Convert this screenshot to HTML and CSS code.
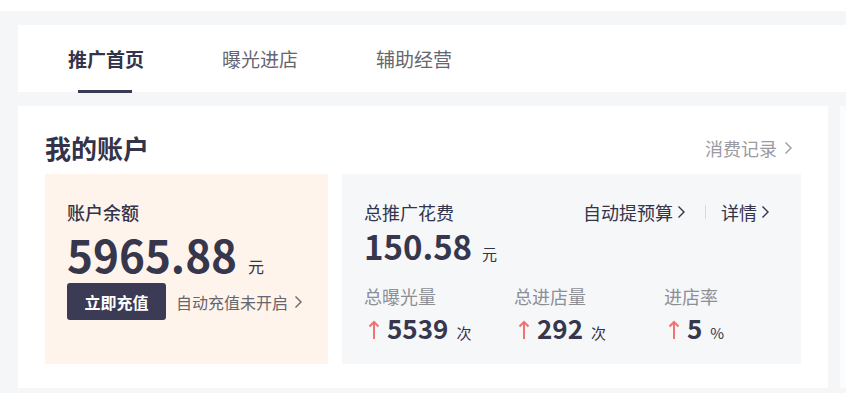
FILE: index.html
```html
<!DOCTYPE html>
<html lang="zh-CN">
<head>
<meta charset="utf-8">
<title>推广首页</title>
<link rel="stylesheet" href="styles.css">
</head>
<body>
<div class="topbar"></div>
<div class="page">
  <nav class="tabs">
    <a class="tab active">推广首页</a>
    <a class="tab">曝光进店</a>
    <a class="tab">辅助经营</a>
  </nav>
  <div class="row">
    <section class="panel">
      <header class="panel-head">
        <h2 class="title">我的账户</h2>
        <a class="link-gray">消费记录<svg class="chev" viewBox="0 0 8 14" width="8" height="14"><polyline points="1.5,1.5 7,7 1.5,12.5"/></svg></a>
      </header>
      <div class="cards">
        <div class="card card-balance">
          <div class="card-label strong">账户余额</div>
          <div class="amount big">5965.88<span class="unit">元</span></div>
          <div class="actions">
            <button class="btn">立即充值</button>
            <a class="link-sub">自动充值未开启<svg class="chev" viewBox="0 0 8 14" width="8" height="14"><polyline points="1.5,1.5 7,7 1.5,12.5"/></svg></a>
          </div>
        </div>
        <div class="card card-spend">
          <div class="spend-head">
            <div class="card-label">总推广花费</div>
            <div class="spend-links">
              <a class="link-dark">自动提预算<svg class="chev" viewBox="0 0 8 14" width="8" height="14"><polyline points="1.5,1.5 7,7 1.5,12.5"/></svg></a>
              <span class="sep"></span>
              <a class="link-dark">详情<svg class="chev" viewBox="0 0 8 14" width="8" height="14"><polyline points="1.5,1.5 7,7 1.5,12.5"/></svg></a>
            </div>
          </div>
          <div class="amount mid">150.58<span class="unit mid-unit">元</span></div>
          <div class="stats">
            <div class="stat">
              <div class="stat-label">总曝光量</div>
              <div class="stat-value"><svg class="up" viewBox="0 0 12 20" width="12" height="20"><line x1="6" y1="2" x2="6" y2="19"/><polyline points="1.5,6.5 6,2 10.5,6.5"/></svg>5539<span class="unit stat-unit">次</span></div>
            </div>
            <div class="stat">
              <div class="stat-label">总进店量</div>
              <div class="stat-value"><svg class="up" viewBox="0 0 12 20" width="12" height="20"><line x1="6" y1="2" x2="6" y2="19"/><polyline points="1.5,6.5 6,2 10.5,6.5"/></svg>292<span class="unit stat-unit">次</span></div>
            </div>
            <div class="stat">
              <div class="stat-label">进店率</div>
              <div class="stat-value"><svg class="up" viewBox="0 0 12 20" width="12" height="20"><line x1="6" y1="2" x2="6" y2="19"/><polyline points="1.5,6.5 6,2 10.5,6.5"/></svg>5<span class="unit stat-unit">%</span></div>
            </div>
          </div>
        </div>
      </div>
    </section>
    <aside class="side"></aside>
  </div>
</div>
</body>
</html>
```
FILE: styles.css
```css
* { box-sizing: border-box; }
html, body { margin: 0; padding: 0; }
body {
  background: #f5f6f8;
  font-family: "Noto Sans CJK SC", "Noto Sans", sans-serif;
  color: #33334a;
  width: 846px;
  height: 393px;
  overflow: hidden;
}
.topbar { height: 11px; background: #ffffff; }
.page { padding: 14px 0 0 18px; }

.tabs {
  display: flex;
  height: 67px;
  background: #ffffff;
  padding-left: 50px;
  gap: 78px;
  align-items: center;
}
.tab {
  position: relative;
  font-size: 19px;
  line-height: 24px;
  color: #666670;
  white-space: nowrap;
}
.tab.active { color: #33334a; font-weight: 700; }
.tab.active::after {
  content: "";
  position: absolute;
  left: 10px;
  right: 12px;
  bottom: -22px;
  height: 3px;
  background: #3a3a52;
}

.row { display: flex; margin-top: 14px; gap: 12px; }
.panel {
  flex: none;
  width: 810px;
  height: 282px;
  background: #ffffff;
  padding: 24px 27px 0 27px;
}
.side { flex: 1; height: 282px; background: #fcfcfd; }

.panel-head {
  display: flex;
  justify-content: space-between;
  align-items: center;
  height: 36px;
  margin-bottom: 8px;
}
.title { margin: 0; font-size: 26px; font-weight: 700; line-height: 36px; color: #33334a; }
.link-gray { display: flex; align-items: center; gap: 7px; font-size: 18px; color: #9a9aa2; margin-right: 9px; }

.chev { flex: none; fill: none; stroke: currentColor; stroke-width: 1.4; }

.cards { display: flex; gap: 14px; height: 190px; }
.card { padding: 26px 0 0 22px; }
.card-balance { flex: none; width: 283px; background: #fef4eb; }
.card-spend { flex: none; width: 459px; background: #f5f7f9; padding-right: 32px; }

.card-label { font-size: 18px; line-height: 24px; color: #33334a; white-space: nowrap; }
.card-label.strong { font-weight: 500; }

.amount { font-weight: 700; line-height: 1; color: #36364d; white-space: nowrap; }
.amount.big { font-size: 44px; height: 44px; margin-top: 8px; }
.amount.mid { font-size: 33px; height: 33px; margin-top: 6px; }
.unit { font-size: 16px; font-weight: 400; margin-left: 11px; color: #33334a; }
.unit.mid-unit { font-size: 15px; margin-left: 10px; }
.unit.stat-unit { font-size: 15px; margin-left: 8px; }

.actions { display: flex; align-items: center; gap: 10px; margin-top: 7px; }
.btn {
  flex: none;
  height: 37px;
  width: 99px;
  border: 0;
  border-radius: 3px;
  background: #3b3b55;
  color: #ffffff;
  font-family: inherit;
  font-size: 16px;
  font-weight: 700;
  padding: 0;
}
.link-sub { display: flex; align-items: center; gap: 6px; font-size: 16px; color: #66666e; white-space: nowrap; }

.spend-head { display: flex; justify-content: space-between; align-items: center; }
.spend-links { display: flex; align-items: center; }
.link-dark { display: flex; align-items: center; gap: 4px; font-size: 18px; line-height: 24px; color: #33334a; white-space: nowrap; }
.sep { width: 1px; height: 14px; background: #d8d8dd; margin: 0 15px 0 20px; }

.stats { display: grid; grid-template-columns: 150px 150px 1fr; margin-top: 21px; }
.stat-label { font-size: 18px; line-height: 24px; color: #8e8e96; white-space: nowrap; }
.stat-value {
  display: flex;
  align-items: baseline;
  margin-top: 6px;
  font-size: 26px;
  font-weight: 700;
  line-height: 27px;
  color: #36364d;
  white-space: nowrap;
}
.up { flex: none; align-self: center; margin: 0 7px 0 4px; fill: none; stroke: #f07272; stroke-width: 2; }
```
